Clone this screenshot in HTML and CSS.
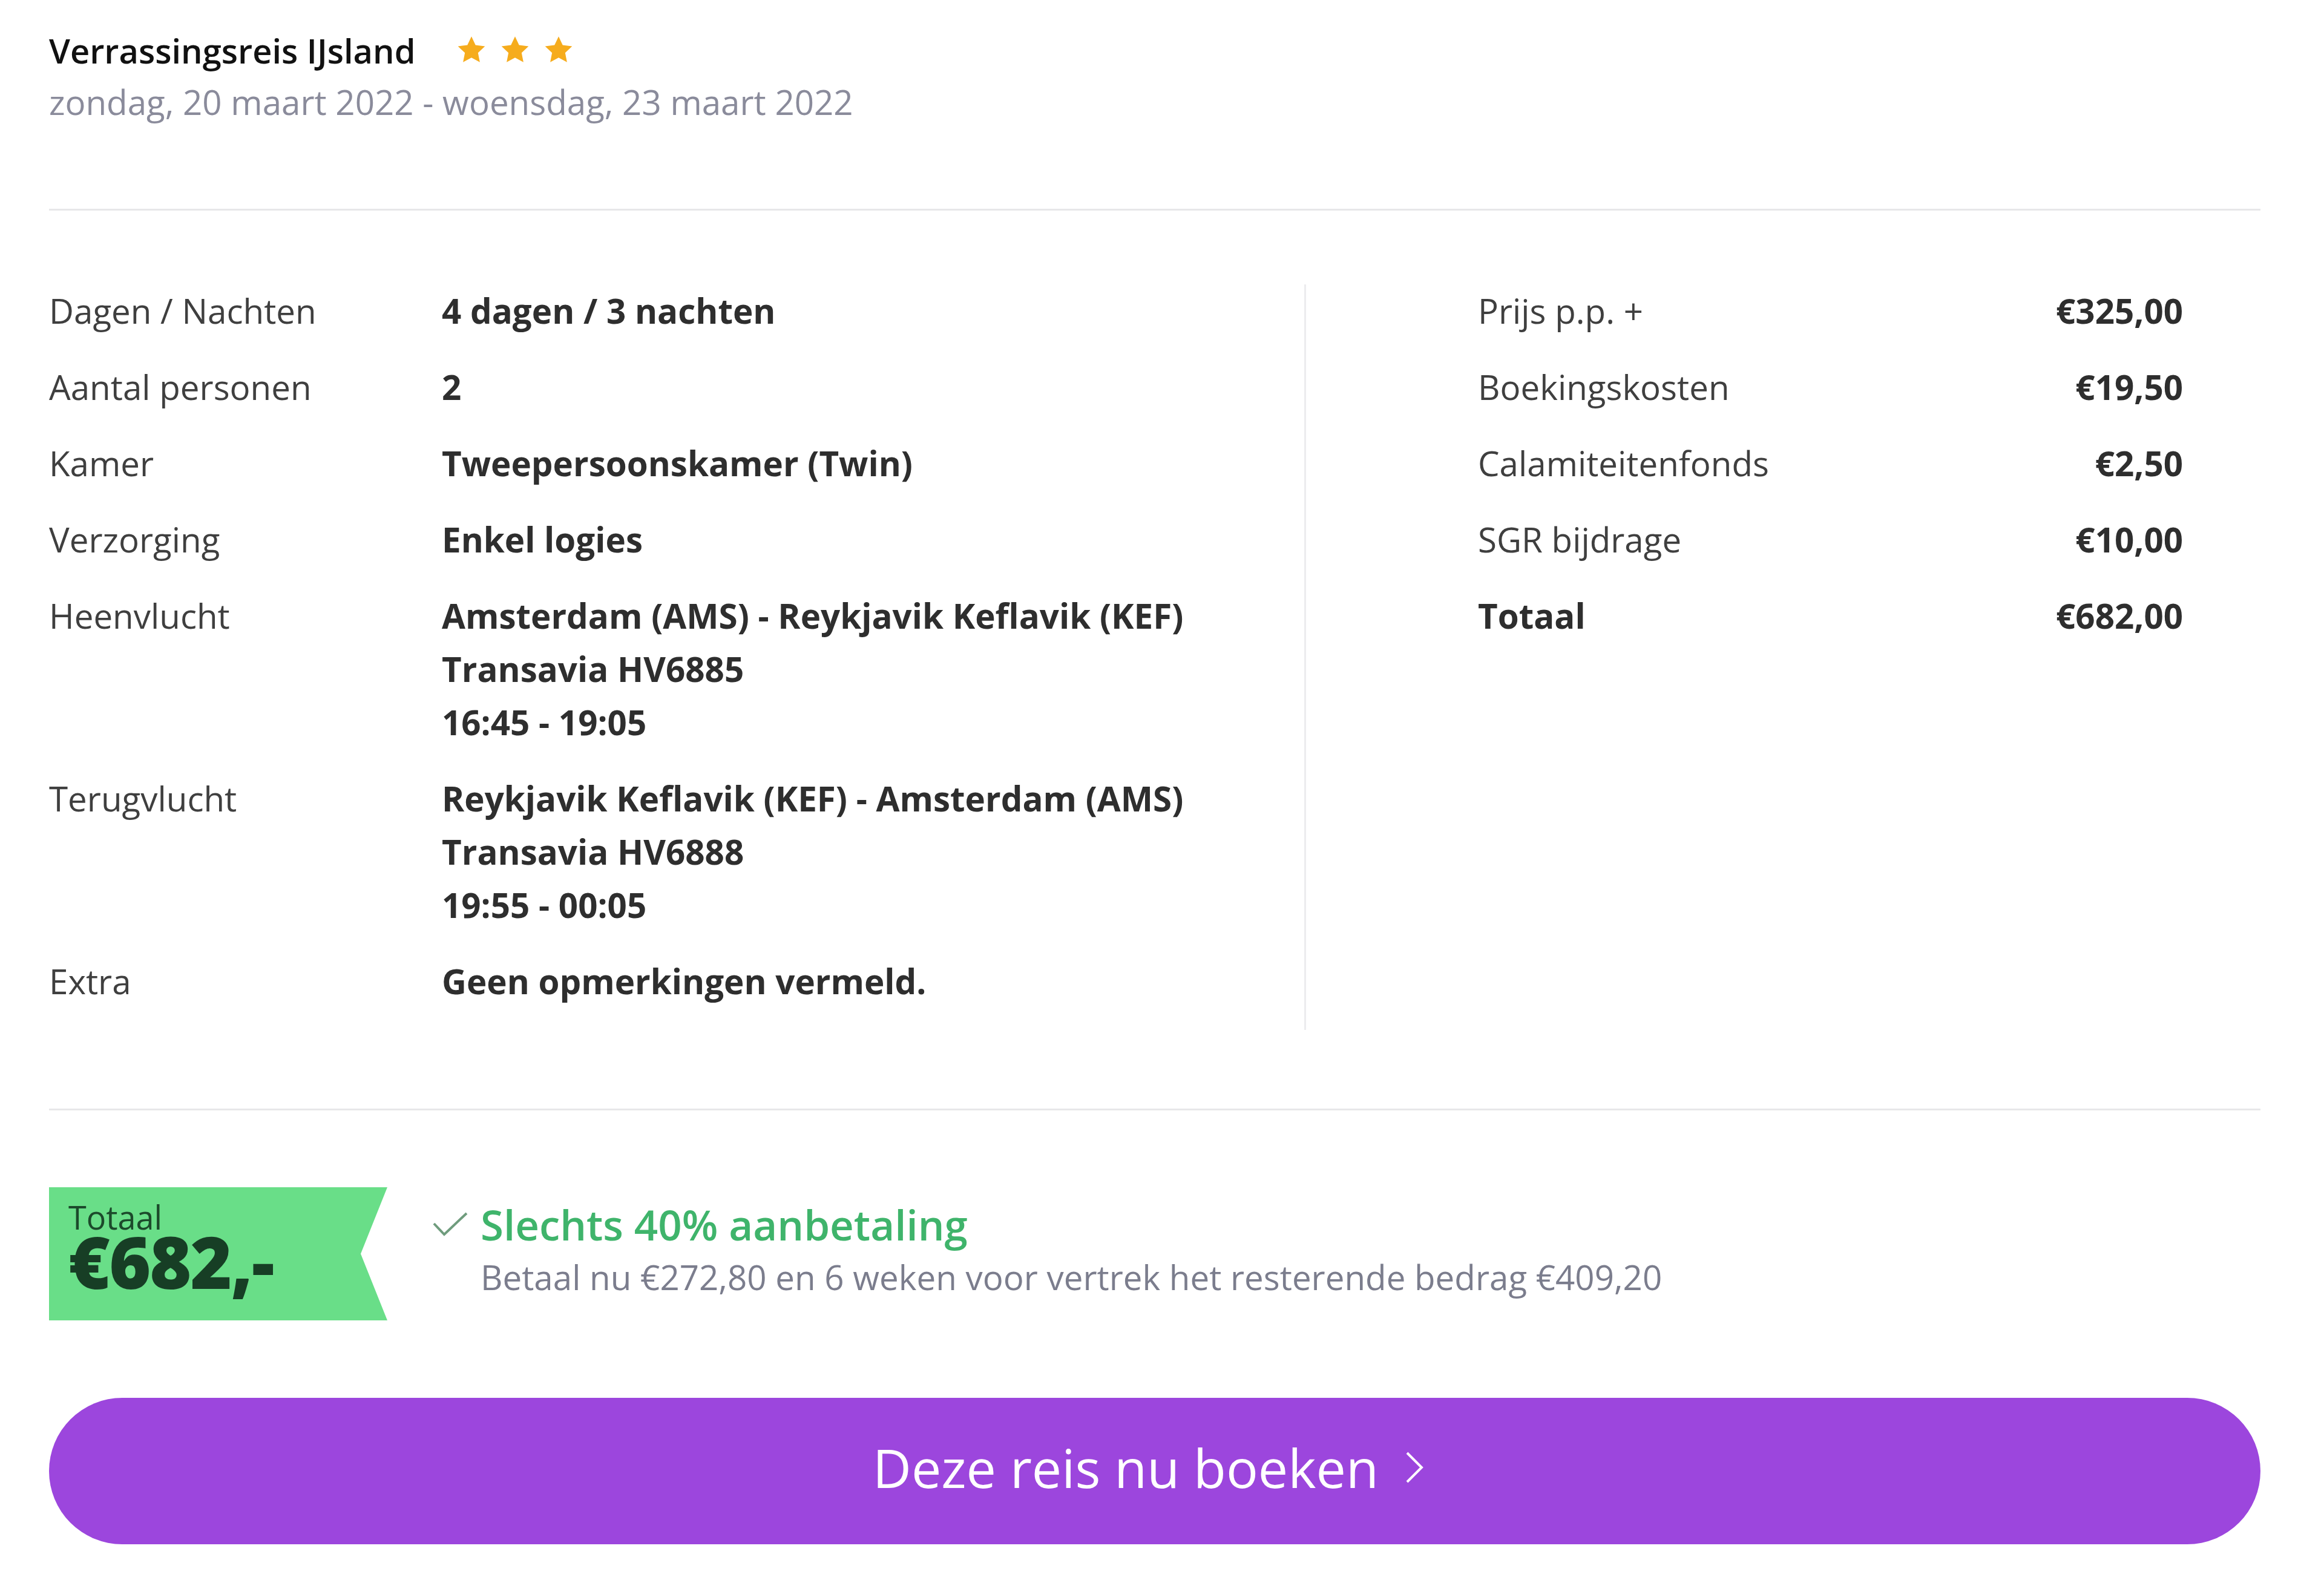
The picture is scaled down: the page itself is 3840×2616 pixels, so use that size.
FILE: index.html
```html
<!DOCTYPE html>
<html lang="nl">
<head>
    <meta charset="UTF-8">
    <meta name="viewport" content="width=device-width, initial-scale=1.0">
    <title>Verrassingsreis IJsland - Boeken</title>
    <link rel="stylesheet" href="styles.css">
</head>
<body>

    <div class="summary">

        <header class="trip-header">
            <div class="trip-title">
                <h2>Verrassingsreis IJsland</h2>
                <span class="stars">
                    <svg viewBox="0 0 24 24"><path d="M12 1.5l3.1 6.6 7.2.9-5.3 5 1.4 7.1L12 17.6l-6.4 3.5L7 14l-5.3-5 7.2-.9z"/></svg>
                    <svg viewBox="0 0 24 24"><path d="M12 1.5l3.1 6.6 7.2.9-5.3 5 1.4 7.1L12 17.6l-6.4 3.5L7 14l-5.3-5 7.2-.9z"/></svg>
                    <svg viewBox="0 0 24 24"><path d="M12 1.5l3.1 6.6 7.2.9-5.3 5 1.4 7.1L12 17.6l-6.4 3.5L7 14l-5.3-5 7.2-.9z"/></svg>
                </span>
            </div>
            <p class="trip-dates">zondag, 20 maart 2022 - woensdag, 23 maart 2022</p>
        </header>

        <hr class="divider">

        <section class="details">
            <dl class="trip-info">
                <dt>Dagen / Nachten</dt>
                <dd>4 dagen / 3 nachten</dd>

                <dt>Aantal personen</dt>
                <dd>2</dd>

                <dt>Kamer</dt>
                <dd>Tweepersoonskamer (Twin)</dd>

                <dt>Verzorging</dt>
                <dd>Enkel logies</dd>

                <dt>Heenvlucht</dt>
                <dd>
                    <span>Amsterdam (AMS) - Reykjavik Keflavik (KEF)</span>
                    <span>Transavia HV6885</span>
                    <span>16:45 - 19:05</span>
                </dd>

                <dt>Terugvlucht</dt>
                <dd>
                    <span>Reykjavik Keflavik (KEF) - Amsterdam (AMS)</span>
                    <span>Transavia HV6888</span>
                    <span>19:55 - 00:05</span>
                </dd>

                <dt>Extra</dt>
                <dd>Geen opmerkingen vermeld.</dd>
            </dl>

            <dl class="price-info">
                <dt>Prijs p.p. +</dt>
                <dd>€325,00</dd>

                <dt>Boekingskosten</dt>
                <dd>€19,50</dd>

                <dt>Calamiteitenfonds</dt>
                <dd>€2,50</dd>

                <dt>SGR bijdrage</dt>
                <dd>€10,00</dd>

                <dt class="total">Totaal</dt>
                <dd>€682,00</dd>
            </dl>
        </section>

        <hr class="divider">

        <section class="payment">
            <div class="total-badge">
                <span class="badge-label">Totaal</span>
                <strong class="badge-price">€682,-</strong>
            </div>

            <div class="deposit">
                <svg class="check" viewBox="0 0 60 42"><path d="M3 20l17 18L57 3"/></svg>
                <div>
                    <p class="deposit-title">Slechts 40% aanbetaling</p>
                    <p class="deposit-note">Betaal nu €272,80 en 6 weken voor vertrek het resterende bedrag €409,20</p>
                </div>
            </div>
        </section>

        <button class="book-btn">
            Deze reis nu boeken
            <svg class="chevron" viewBox="0 0 30 54"><path d="M3 3l24 24L3 51"/></svg>
        </button>

    </div>

</body>
</html>
```

FILE: styles.css
```css
body {
    margin: 0;
    background-color: #fff;
    font-family: "Open Sans", "Liberation Sans", sans-serif;
    color: #3a3a3a;
}

.summary {
    padding: 40px 105px 0 81px;
}

/* header */

.trip-title {
    display: flex;
    align-items: center;
}

.trip-title h2 {
    margin: 0;
    font-size: 56px;
    line-height: 86px;
    font-weight: 600;
    color: #111;
}

.stars {
    display: flex;
    gap: 20px;
    margin-left: 66px;
}

.stars svg {
    width: 52px;
    height: 52px;
    fill: #f6ac1d;
}

.trip-dates {
    margin: 0;
    font-size: 56.5px;
    line-height: 86px;
    color: #8a8b9b;
}

.divider {
    border: none;
    border-top: 3px solid #e7e7e9;
    margin: 133px 0 0;
}

/* details */

.details {
    display: grid;
    grid-template-columns: 2077px 1fr;
    margin-top: 122px;
}

.details dl {
    display: grid;
    row-gap: 38px;
    margin: 0;
    font-size: 56.5px;
    line-height: 88px;
}

.details dt {
    color: #3f3f3f;
}

.details dd {
    margin: 0;
    font-weight: 700;
    color: #2e2e2e;
}

.trip-info {
    grid-template-columns: 649px 1fr;
    padding-bottom: 36px;
    border-right: 3px solid #ececee;
}

.trip-info dd span {
    display: block;
}

.price-info {
    grid-template-columns: 1fr auto;
    align-content: start;
    padding: 0 128px 0 284px;
}

.price-info dd {
    text-align: right;
}

.price-info dt.total {
    font-weight: 700;
    color: #2e2e2e;
}

.details + .divider {
    margin-top: 130px;
}

/* payment */

.payment {
    display: flex;
    align-items: flex-start;
    margin-top: 127px;
}

.total-badge {
    display: flex;
    flex-direction: column;
    box-sizing: border-box;
    width: 559px;
    height: 220px;
    padding: 21px 0 0 32px;
    background-color: #69de88;
    clip-path: polygon(0 0, 100% 0, calc(100% - 44px) 50%, 100% 100%, 0 100%);
}

.badge-label {
    font-size: 54px;
    line-height: 56px;
    color: #1c4a2b;
}

.badge-price {
    font-size: 118px;
    line-height: 92px;
    font-weight: 800;
    letter-spacing: -2px;
    color: #173e25;
}

.deposit {
    display: flex;
    gap: 19px;
    margin-left: 73px;
    padding-top: 17px;
}

.check {
    flex: none;
    width: 62px;
    height: 42px;
    margin-top: 23px;
    fill: none;
    stroke: #6f9c7d;
    stroke-width: 4;
}

.deposit p {
    margin: 0;
}

.deposit-title {
    font-size: 69px;
    line-height: 88px;
    font-weight: 600;
    color: #3fb46b;
}

.deposit-note {
    font-size: 56.5px;
    line-height: 88px;
    color: #7b7d8d;
}

/* button */

.book-btn {
    display: flex;
    align-items: center;
    justify-content: center;
    gap: 44px;
    box-sizing: border-box;
    width: 100%;
    height: 242px;
    margin-top: 128px;
    padding: 0 22px 12px 0;
    border: none;
    border-radius: 121px;
    background-color: #9c46dd;
    color: #fff;
    font-family: inherit;
    font-size: 88px;
    cursor: pointer;
}

.chevron {
    width: 30px;
    height: 54px;
    fill: none;
    stroke: #fff;
    stroke-width: 4;
}
```
